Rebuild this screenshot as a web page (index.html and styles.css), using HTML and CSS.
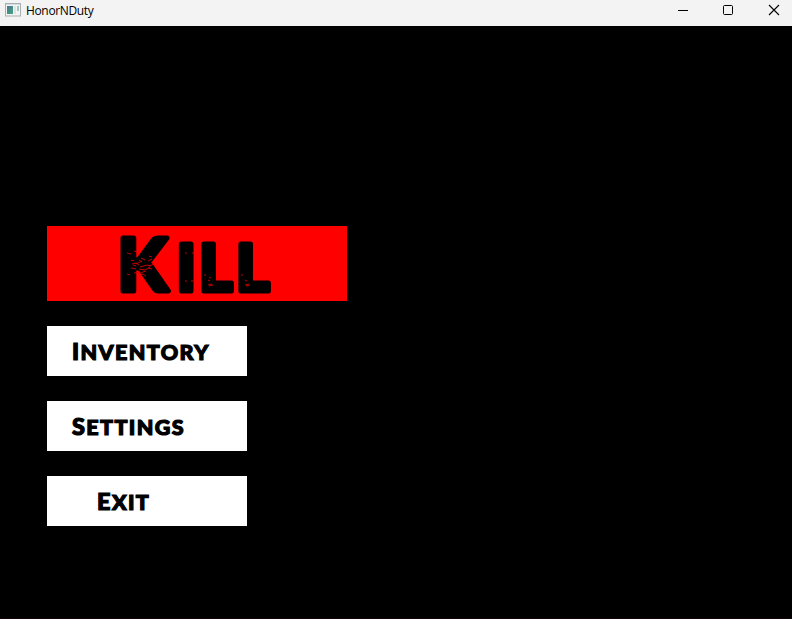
FILE: index.html
```html
<!DOCTYPE html>
<html lang="en">
<head>
<meta charset="utf-8">
<title>HonorNDuty</title>
<link rel="stylesheet" href="styles.css">
</head>
<body>
<header class="titlebar">
  <svg class="app-icon" width="16" height="14" viewBox="0 0 16 14">
    <defs><linearGradient id="g" x1="0" y1="0" x2="1" y2="1"><stop offset="0" stop-color="#4a7299"/><stop offset="1" stop-color="#43a878"/></linearGradient></defs>
    <rect x=".5" y=".5" width="15" height="12.500" fill="#f4f4f4" stroke="#a9afb3"/>
    <rect x="1" y="1" width="14" height="1" fill="#d5dade"/>
    <rect x="2" y="3" width="6" height="8" fill="url(#g)"/>
    <rect x="9" y="3" width="2" height="8" fill="#dfe3e6"/>
    <rect x="12" y="3" width="2" height="5" fill="#a5c8be"/>
  </svg>
  <span class="title">HonorNDuty</span>
  <nav class="controls">
    <svg width="46" height="20" viewBox="0 0 46 20"><path d="M13 10.500h10" stroke="#000"/></svg>
    <svg width="45" height="20" viewBox="0 0 45 20"><rect x="12.500" y="5.500" width="9" height="9" rx="1" fill="none" stroke="#000"/></svg>
    <svg width="46" height="20" viewBox="0 0 46 20"><path d="M13 5l10 10M23 5l-10 10" stroke="#000" stroke-width="1.100"/></svg>
  </nav>
</header>
<main class="menu">
  <div class="button kill">
    <svg width="300" height="75" viewBox="0 0 300 75">
      <text class="kill-text" y="64.500" x="70.500 129.500 152 189"><tspan class="cap">K</tspan>ILL</text>
      <path class="wear" d="M87 25l3 1M84 34l3 1m5-1l3 2m-10 2l4-1 3 2m-8 3l5 1m-2 4l6-1m-4-8l6-3m-2 6l7-2 4 1m-12 3l6 1 5-3m-10 6l6-2m-7 5l4-2 3 2m-5-18l4 2m4-4l3 1m-4 4l4-2m-3 7l5-2m-6 4l4 1m-19-4l3 1M80 27l4 1m-4 20l3 1M138 27h2m5 0h2m-9 28h2m4 0h3M158 48v2m3 4l2 1m-2 4l4-1m-3 2l4-1m-4-8l2 1M195 48v2m3 4l2 1m-2 4l4-1m-3 2l4-1"/>
    </svg>
  </div>
  <div class="button"><span class="label">INVENTORY</span></div>
  <div class="button"><span class="label">SETTINGS</span></div>
  <div class="button exit-button"><span class="label">EXIT</span></div>
</main>
</body>
</html>
```

FILE: styles.css
```css
body {
  margin: 0;
  box-sizing: border-box;
  height: 619px;
  overflow: hidden;
  background: #000;
  border-bottom: 1px solid #12000a;
  color: #000;
}
.titlebar {
  box-sizing: border-box;
  height: 26px;
  padding-left: 5px;
  display: flex;
  align-items: flex-start;
  background: #f3f3f3;
}
.app-icon { margin-top: 3px; }
.title {
  margin: 3px 0 0 5px;
  font: 12px/16px "Open Sans", sans-serif;
  letter-spacing: -0.350px;
}
.controls {
  margin-left: auto;
  margin-right: -10px;
  display: flex;
}
.menu {
  padding: 200px 0 0 47px;
  display: flex;
  flex-direction: column;
  gap: 25px;
}
.button {
  box-sizing: border-box;
  width: 200px;
  height: 50px;
  padding-left: 25px;
  background: #fff;
}
.kill {
  width: 300px;
  height: 75px;
  padding: 0;
  background: #f00;
}
.kill svg {
  display: block;
  overflow: visible;
}
.kill-text {
  font: 900 64px Lato, sans-serif;
  stroke: #000;
  stroke-width: 5px;
  stroke-linejoin: round;
}
.kill-text .cap { font-size: 72px; }
.wear {
  fill: none;
  stroke: #d80000;
  stroke-width: 0.900;
}
.exit-button { padding-left: 50px; }
.label {
  display: block;
  font: 900 21.500px/51px Lato, sans-serif;
  letter-spacing: 1.400px;
  -webkit-text-stroke: 1.200px #000;
  white-space: nowrap;
}
.label::first-letter { font-size: 23.500px; }
```
